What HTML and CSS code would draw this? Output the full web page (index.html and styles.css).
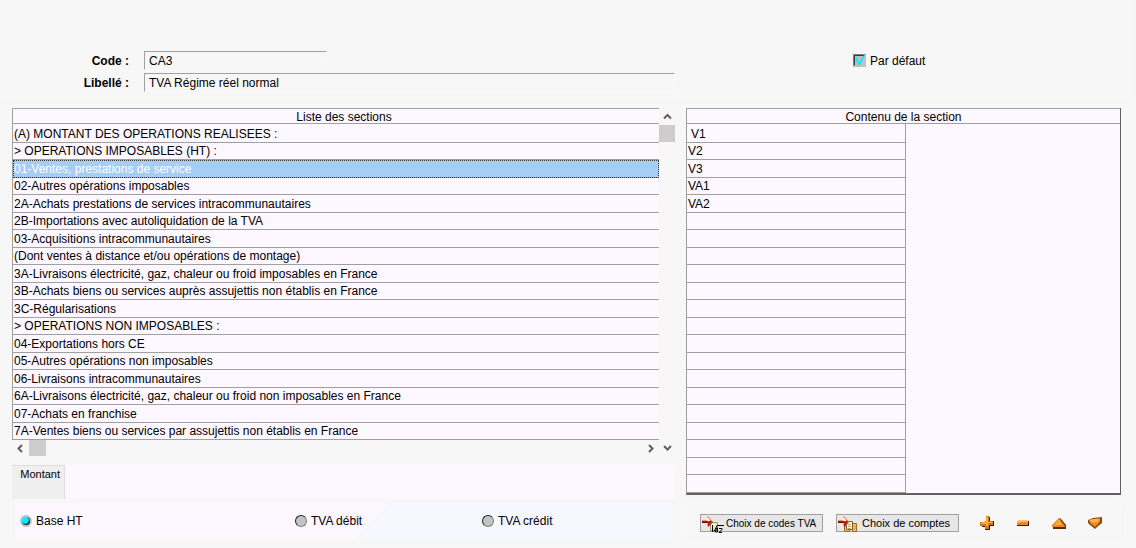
FILE: index.html
```html
<!DOCTYPE html>
<html lang="fr">
<head>
  <meta charset="UTF-8" />
  <title>TVA - Sections</title>
  <link rel="stylesheet" href="styles.css">
</head>
<body>
  <form class="page">
    <header class="top">
      <div class="fields">
        <label for="code">Code :</label>
        <input type="text" id="code" class="short" value="CA3" />
        <label for="libelle">Libellé :</label>
        <input type="text" id="libelle" value="TVA Régime réel normal" />
      </div>
      <label class="default"><input type="checkbox" checked /> Par défaut</label>
    </header>

    <main class="columns">
      <section class="left">
        <div class="list">
          <table class="sections">
            <thead>
              <tr><th>Liste des sections</th></tr>
            </thead>
            <tbody>
              <tr><td>(A) MONTANT DES OPERATIONS REALISEES :</td></tr>
              <tr><td>&gt; OPERATIONS IMPOSABLES (HT) :</td></tr>
              <tr class="selected"><td>01-Ventes, prestations de service</td></tr>
              <tr><td>02-Autres opérations imposables</td></tr>
              <tr><td>2A-Achats prestations de services intracommunautaires</td></tr>
              <tr><td>2B-Importations avec autoliquidation de la TVA</td></tr>
              <tr><td>03-Acquisitions intracommunautaires</td></tr>
              <tr><td>(Dont ventes à distance et/ou opérations de montage)</td></tr>
              <tr><td>3A-Livraisons électricité, gaz, chaleur ou froid imposables en France</td></tr>
              <tr><td>3B-Achats biens ou services auprès assujettis non établis en France</td></tr>
              <tr><td>3C-Régularisations</td></tr>
              <tr><td>&gt; OPERATIONS NON IMPOSABLES :</td></tr>
              <tr><td>04-Exportations hors CE</td></tr>
              <tr><td>05-Autres opérations non imposables</td></tr>
              <tr><td>06-Livraisons intracommunautaires</td></tr>
              <tr><td>6A-Livraisons électricité, gaz, chaleur ou froid non imposables en France</td></tr>
              <tr><td>07-Achats en franchise</td></tr>
              <tr><td>7A-Ventes biens ou services par assujettis non établis en France</td></tr>
            </tbody>
          </table>
          <div class="vscroll">
            <svg width="16" height="16" viewBox="0 0 16 16"><path d="M5 10.500L8.500 7L12 10.500" /></svg>
            <span class="thumb"></span>
            <svg class="end" width="16" height="16" viewBox="0 0 16 16"><path d="M5 6L8.500 9.500L12 6" /></svg>
          </div>
          <div class="hscroll">
            <svg width="16" height="16" viewBox="0 0 16 16"><path d="M10 5L6.500 8.500L10 12" /></svg>
            <span class="thumb"></span>
            <svg class="end" width="16" height="16" viewBox="0 0 16 16"><path d="M6 5L9.500 8.500L6 12" /></svg>
          </div>
        </div>

        <div class="tabs">
          <button type="button" class="tab">Montant</button>
        </div>

        <div class="choices">
          <label><input type="radio" name="montant" checked /> Base HT</label>
          <label><input type="radio" name="montant" /> TVA débit</label>
          <label><input type="radio" name="montant" /> TVA crédit</label>
        </div>
      </section>

      <section class="right">
        <table class="content">
          <colgroup>
            <col class="codes">
            <col>
          </colgroup>
          <thead>
            <tr><th colspan="2">Contenu de la section</th></tr>
          </thead>
          <tbody>
            <tr><td>V1</td><td class="empty" rowspan="21"></td></tr>
            <tr><td>V2</td></tr>
            <tr><td>V3</td></tr>
            <tr><td>VA1</td></tr>
            <tr><td>VA2</td></tr>
            <tr><td></td></tr>
            <tr><td></td></tr>
            <tr><td></td></tr>
            <tr><td></td></tr>
            <tr><td></td></tr>
            <tr><td></td></tr>
            <tr><td></td></tr>
            <tr><td></td></tr>
            <tr><td></td></tr>
            <tr><td></td></tr>
            <tr><td></td></tr>
            <tr><td></td></tr>
            <tr><td></td></tr>
            <tr><td></td></tr>
            <tr><td></td></tr>
            <tr><td></td></tr>
          </tbody>
        </table>

        <div class="actions">
          <button type="button" class="choose small">
            <svg width="24" height="20" viewBox="0 0 24 20">
              <path fill="#f4eec0" stroke="#a09a70" d="M9.500 9.500h7v8h-7z" />
              <path fill="#f09070" d="M1 7h5V3l2 1 4 4.500-5 5-1-1V10H1z" />
              <path fill="#fff" d="M6 4l4 4H6z" />
              <path fill="#c81808" d="M1 8h8V7l2 1.500L7 13v-3H1z" />
              <path fill="#501008" d="M1 9h5v1H1zM11 9l1 0-5 5v-1z" />
              <path fill="none" stroke="#000" d="M11.500 12v7M13 18.500l3-6M15.500 15h1v4h-2zM16 12.500h7M18 15.500h3v1l-3 3h3" />
            </svg>
            Choix de codes TVA
          </button>
          <button type="button" class="choose">
            <svg width="24" height="20" viewBox="0 0 24 20">
              <path fill="#e0c080" stroke="#a06820" d="M7.500 11.500h5v7h-5zM15.500 10.500h4v8h-4z" />
              <path fill="#fff8d0" stroke="#806030" d="M9.500 8.500h6v8h-6z" />
              <path stroke="#c0a860" d="M11 11.500h3M11 13.500h3M11 15.500h3M16 13.500h3M16 15.500h3" />
              <path fill="#f09070" d="M1 7h5V3l2 1 4 4.500-5 5-1-1V10H1z" />
              <path fill="#fff" d="M6 4l4 4H6z" />
              <path fill="#c81808" d="M1 8h8V7l2 1.500L7 13v-3H1z" />
              <path fill="#501008" d="M1 9h5v1H1zM11 9l1 0-5 5v-1z" />
            </svg>
            Choix de comptes
          </button>
          <button type="button" class="tool" aria-label="Ajouter">
            <svg width="16" height="16" viewBox="0 0 16 16">
              <path fill="#3a1c00" d="M7 2h4v4h4v5h-4v4H6v-3H3V8h4z" />
              <path fill="#d87818" d="M7 1h3v5h4v4h-4v4H6v-3H1V7h4l2-1z" />
              <path fill="#ffa840" d="M7 2h2v5h4v1H9v3H7V9H2V8l5-2z" />
            </svg>
          </button>
          <button type="button" class="tool" aria-label="Supprimer">
            <svg width="16" height="16" viewBox="0 0 16 16">
              <path fill="#3a1c00" d="M3 6h11v5H2V9z" />
              <path fill="#e88820" d="M4 5h9v5H2V7z" />
              <path fill="#ffc070" d="M4 5h9v2H6L2 8V7z" />
            </svg>
          </button>
          <button type="button" class="tool" aria-label="Monter">
            <svg width="16" height="16" viewBox="0 0 16 16">
              <path fill="#5a2c00" d="M8 3l2 1 5 6v4H2v-3z" />
              <path fill="#e88820" d="M8 3l6 8v1H1v-2z" />
              <path fill="#ffa840" d="M8 4l3 6H3z" />
            </svg>
          </button>
          <button type="button" class="tool" aria-label="Descendre">
            <svg width="16" height="16" viewBox="0 0 16 16">
              <path fill="#8a4810" d="M1 5l5-2 9-1v6l-5 4-2 2-5-4-2-2z" />
              <path fill="#e88820" d="M2 5l5-1 6-1v4l-5 5-5-4z" />
              <path fill="#ffb050" d="M2 5l5-1 5 0-1 3-5 1z" />
            </svg>
          </button>
        </div>
      </section>
    </main>
  </form>
</body>
</html>
```
FILE: styles.css
```css
* {
  box-sizing: border-box;
}

body {
  margin: 0;
  background: #f7f7f7;
  color: #000;
  font-family: "Liberation Sans", Arial, sans-serif;
  font-size: 12px;
}

input, button {
  font: inherit;
  color: inherit;
  margin: 0;
}

svg {
  display: block;
  flex: none;
}

.top {
  display: grid;
  grid-template-columns: 675fr 455fr;
  height: 98px;
  margin-right: 5px;
  padding-top: 51px;
  border-right: 1px solid #fdf8fd;
  border-bottom: 1px solid #fdf8fd;
  border-bottom-right-radius: 6px;
}

.fields {
  display: grid;
  grid-template-columns: 129px 1fr;
  grid-auto-rows: 19px;
  gap: 3px 15px;
}

.fields label {
  font-weight: bold;
  line-height: 20px;
  text-align: right;
}

.fields input {
  width: 100%;
  padding: 0 4px;
  background: #f7f7f7;
  border: 1px solid #fafafa;
  border-top-color: #a0a0a0;
  border-left-color: #a0a0a0;
}

.fields .short {
  width: 183px;
}

.default {
  display: flex;
  align-items: center;
  gap: 4px;
  height: 19px;
  margin-left: 178px;
}

.default input {
  appearance: none;
  width: 13px;
  height: 13px;
  border: 1px solid #808080;
  border-right-color: #c0c0c0;
  border-bottom-color: #c0c0c0;
  background: #c0c0c0 url("data:image/svg+xml,%3Csvg xmlns='http://www.w3.org/2000/svg' viewBox='0 0 12 12'%3E%3Cpath d='M.5 11V.5H11' fill='none' stroke='%23222'/%3E%3C/svg%3E");
}

.default input:checked {
  background-image: url("data:image/svg+xml,%3Csvg xmlns='http://www.w3.org/2000/svg' viewBox='0 0 12 12'%3E%3Cpath d='M.5 11V.5H11' fill='none' stroke='%23222'/%3E%3Cpath d='M2 3L5.500 10L11 1' fill='none' stroke='%2300f0ff' stroke-width='2'/%3E%3C/svg%3E");
}

.columns {
  display: grid;
  grid-template-columns: 663fr 435fr;
  gap: 11px;
  padding: 10px 15px 4px 12px;
}

.list {
  display: grid;
  grid-template-columns: 1fr 16px;
}

table {
  width: 100%;
  border-spacing: 0;
  background: #fdf7ff;
  table-layout: fixed;
}

th {
  height: 16px;
  padding: 1px 0 0;
  border-top: 1px solid #a0a0a0;
  border-bottom: 1px solid #a0a0a0;
  font-weight: normal;
  line-height: 13px;
}

.content th,
.sections th {
  padding-top: 2px;
  line-height: 12px;
}

td {
  height: 18px;
  padding: 0 1px;
  border-bottom: 1px solid #a0a0a0;
  line-height: 16px;
  white-space: nowrap;
}

tr:nth-child(even) td {
  height: 17px;
}

tbody tr:first-child td {
  height: 19px;
  padding-top: 2px;
}

.sections {
  border-left: 1px solid #a0a0a0;
}

.sections th {
  padding-left: 16px;
}

.sections .selected td {
  background: #a5cdf5;
  color: #fff;
  outline: 1px dotted #333;
  outline-offset: -1px;
}

.vscroll {
  display: flex;
  flex-direction: column;
  grid-row: span 2;
}

.hscroll {
  display: flex;
}

.vscroll path,
.hscroll path {
  fill: none;
  stroke: #606060;
  stroke-width: 2;
}

.thumb {
  width: 17px;
  height: 17px;
  background: #cdcdcd;
}

.vscroll .thumb {
  width: 16px;
  margin-top: 1px;
}

.hscroll .thumb {
  height: 16px;
  margin-left: 1px;
}

.vscroll .end {
  margin-top: auto;
}

.hscroll .end {
  margin-left: auto;
}

.tabs {
  display: flex;
  height: 34px;
  margin-top: 9px;
  background: #fdf7ff;
}

.tab {
  display: flex;
  width: 53px;
  padding: 2px 4px;
  justify-content: flex-end;
  border: 1px solid #dedede;
  border-width: 1px 1px 0 0;
  background: #efefef;
  font-size: 11px;
}

.choices {
  display: flex;
  height: 36px;
  margin: 4px 3px 0;
  padding-left: 5px;
  align-items: center;
  background: linear-gradient(135deg, #fdf7ff 54%, #f7f7ff 54%);
}

.choices label {
  display: flex;
  align-items: center;
  gap: 4px;
  width: 187px;
}

.choices label:first-child {
  width: 275px;
}

.choices input {
  appearance: none;
  width: 12px;
  height: 12px;
  border: 1px solid #808080;
  border-top-color: #202020;
  border-left-color: #202020;
  border-radius: 50%;
  background: #c4c4c4;
}

.choices input:checked {
  border: 2px solid #c0c0c0;
  background: radial-gradient(circle at 3px 3px, #00f0ff 3px, #101010 5px);
}

.content {
  border-left: 1px solid #a0a0a0;
  border-right: 1px solid #606060;
  border-bottom: 2px solid #606060;
}

.codes {
  width: 219px;
}

.content td {
  border-right: 1px solid #a0a0a0;
}

.content tbody tr:first-child td:first-child {
  padding-left: 4px;
}

.content .empty {
  border: 0;
}

.actions {
  display: flex;
  align-items: center;
  height: 42px;
  margin-top: 7px;
  padding-left: 13px;
  border: 1px solid #fdf8fd;
  border-radius: 6px;
}

.choose {
  display: flex;
  align-items: center;
  gap: 1px;
  width: 123px;
  height: 18px;
  margin-right: 13px;
  padding: 0;
  border: 1px solid #a0a0a0;
  background: #e7e7e7;
  font-size: 11px;
  white-space: nowrap;
}

.small {
  font-size: 10px;
}

.tool {
  width: 16px;
  height: 16px;
  margin-left: 7px;
  margin-right: 13px;
  padding: 0;
  border: 0;
  background: none;
}
```
